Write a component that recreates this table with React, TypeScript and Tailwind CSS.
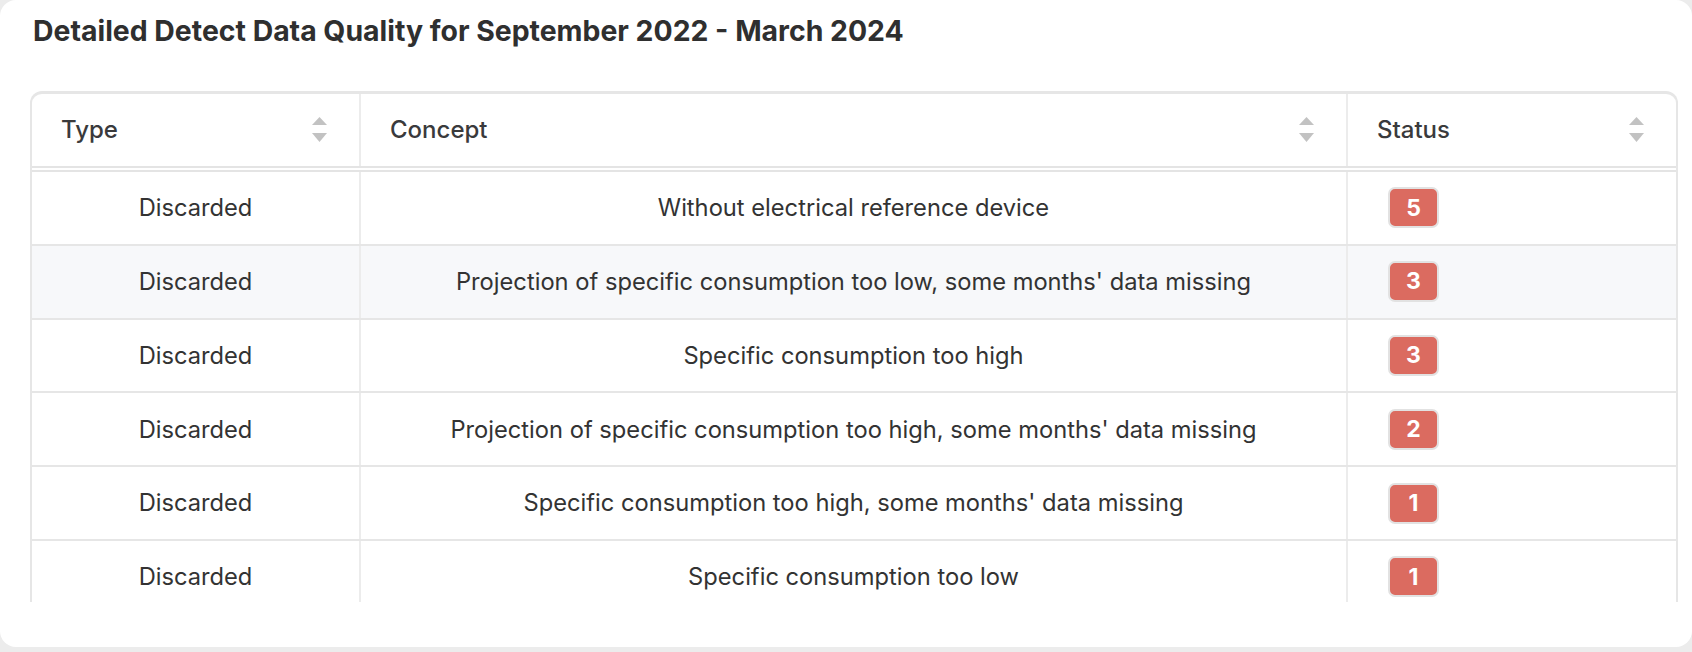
// Tabla de calidad de datos: cabecera con orden y cuerpo recortado
// que muestra las filas descartadas y su recuento.

const rows = [
  { type: "Discarded", concept: "Without electrical reference device", count: 5 },
  { type: "Discarded", concept: "Projection of specific consumption too low, some months' data missing", count: 3 },
  { type: "Discarded", concept: "Specific consumption too high", count: 3 },
  { type: "Discarded", concept: "Projection of specific consumption too high, some months' data missing", count: 2 },
  { type: "Discarded", concept: "Specific consumption too high, some months' data missing", count: 1 },
  { type: "Discarded", concept: "Specific consumption too low", count: 1 },
]

// fila bajo el cursor en la captura
const hoveredRow = 1

const cols = "grid grid-cols-[329px_987px_1fr]"

function SortIcon() {
  return (
    <svg width="15" height="27" viewBox="0 0 15 27" aria-hidden className="shrink-0">
      <path d="M7.5 0 L15 8 L0 8 Z" fill="#c2c2c2" />
      <path d="M0 16 L15 16 L7.5 25 Z" fill="#c2c2c2" />
    </svg>
  )
}

function HeaderCell({ label, last }: { label: string; last?: boolean }) {
  return (
    <div
      className={
        "flex items-center justify-between pl-[29px] pr-[32px] " +
        (last ? "" : "border-r-2 border-[#ececec]")
      }
    >
      <span className="text-[24px] font-medium text-[#3a3a3c]">{label}</span>
      <SortIcon />
    </div>
  )
}

function CountBadge({ count }: { count: number }) {
  return (
    <span className="inline-flex h-[41px] w-[51px] items-center justify-center rounded-[7px] border-2 border-[#e2e2e2] bg-[#db6b60] text-[23px] font-bold text-white">
      {count}
    </span>
  )
}

export default function App() {
  return (
    <div className="h-[652px] w-full bg-[#ececec] font-['Inter',sans-serif]">
      <div className="h-[647px] w-full overflow-hidden rounded-[16px] bg-white pl-[30px] pr-[14px]">
        <h2 className="pt-[14px] pl-[3px] text-[28.4px] leading-[34px] font-bold text-[#2f2f2f]">
          Detailed Detect Data Quality for September 2022 - March 2024
        </h2>

        <div className="mt-[43px] rounded-t-[12px] border-x-2 border-t-[3px] border-[#e6e6e6]">
          <div className={cols + " h-[74px] border-b-2 border-[#e4e4e4]"}>
            <HeaderCell label="Type" />
            <HeaderCell label="Concept" />
            <HeaderCell label="Status" last />
          </div>

          <div className="mt-[2px] h-[432px] overflow-hidden border-t-2 border-[#e4e4e4]">
            {rows.map((r, i) => (
              <div
                key={i}
                className={
                  cols +
                  " h-[73.8px] border-b-2 border-[#e6e6e6] text-[23.7px] text-[#333333] " +
                  (i === hoveredRow ? "bg-[#f7f8fa]" : "bg-white")
                }
              >
                <div className="flex items-center justify-center border-r-2 border-[#ececec]">
                  {r.type}
                </div>
                <div className="flex items-center justify-center border-r-2 border-[#ececec] px-4 text-center">
                  {r.concept}
                </div>
                <div className="flex items-center pl-[40px]">
                  <CountBadge count={r.count} />
                </div>
              </div>
            ))}
          </div>
        </div>
      </div>
    </div>
  )
}
